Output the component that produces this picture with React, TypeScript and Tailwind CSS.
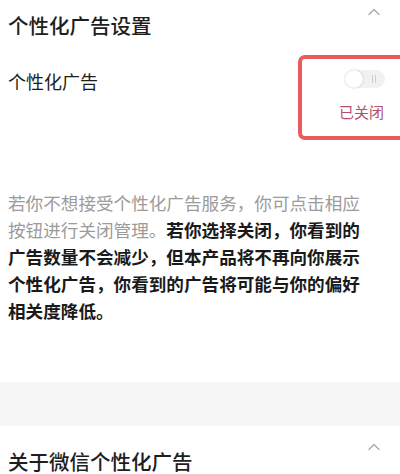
import { ChevronUp } from 'lucide-react';

const cjk = { fontFamily: '"Noto Sans CJK SC", "Noto Sans", sans-serif' };

function Toggle() {
  return (
    <div className="relative h-[18px] w-[40px] rounded-full bg-[#f1f1f1]">
      <span className="absolute right-[9px] top-[5px] flex gap-[2px]">
        <span className="block h-[8px] w-[1px] bg-[#cfcfcf]" />
        <span className="block h-[8px] w-[1px] bg-[#cfcfcf]" />
      </span>
      <span className="absolute left-0 top-0 h-[18px] w-[18px] rounded-full bg-white shadow-[0_0_2px_rgba(0,0,0,0.25)]" />
    </div>
  );
}

export default function App() {
  return (
    <div className="h-[474px] w-[400px] overflow-hidden bg-white text-[#1e1e1e]" style={cjk}>
      {/* 设置 */}
      <div className="flex items-start justify-between pl-2 pr-[16px]">
        <h1 className="mt-[11px] text-[20.5px] leading-[28px] font-medium">个性化广告设置</h1>
        <ChevronUp className="mt-[2px] h-[20px] w-[20px] text-[#a8a8a8]" strokeWidth={1.5} />
      </div>

      <div className="mt-[16px] flex items-start justify-between pl-2">
        <span className="mt-[13px] text-[18px] leading-[26px]">个性化广告</span>
        <div className="-mr-[6px] flex h-[85px] w-[108px] flex-col items-start rounded-[7px] border-[4px] border-[#ec5a5c] pl-[43px] pt-[11px]">
          <Toggle />
          <span className="mt-[14px] ml-[-6px] text-[15px] leading-[20px] text-[#b3506e]">已关闭</span>
        </div>
      </div>

      <p className="mt-[49px] w-[370px] px-2 text-[17.6px] leading-[27px]">
        <span className="text-[#9b9b9b]">若你不想接受个性化广告服务，你可点击相应<br />按钮进行关闭管理。</span>
        <span className="font-bold text-[#1a1a1a]">若你选择关闭，你看到的<br />广告数量不会减少，但本产品将不再向你展示<br />个性化广告，你看到的广告将可能与你的偏好<br />相关度降低。</span>
      </p>

      <div className="mt-[58px] h-[44px] bg-[#f7f7f7]" />

      <div className="flex items-start justify-between pl-2 pr-[16px]">
        <h2 className="mt-[21px] text-[20.5px] leading-[28px] font-medium">关于微信个性化广告</h2>
        <ChevronUp className="mt-[11px] h-[20px] w-[20px] text-[#a8a8a8]" strokeWidth={1.5} />
      </div>
    </div>
  );
}
